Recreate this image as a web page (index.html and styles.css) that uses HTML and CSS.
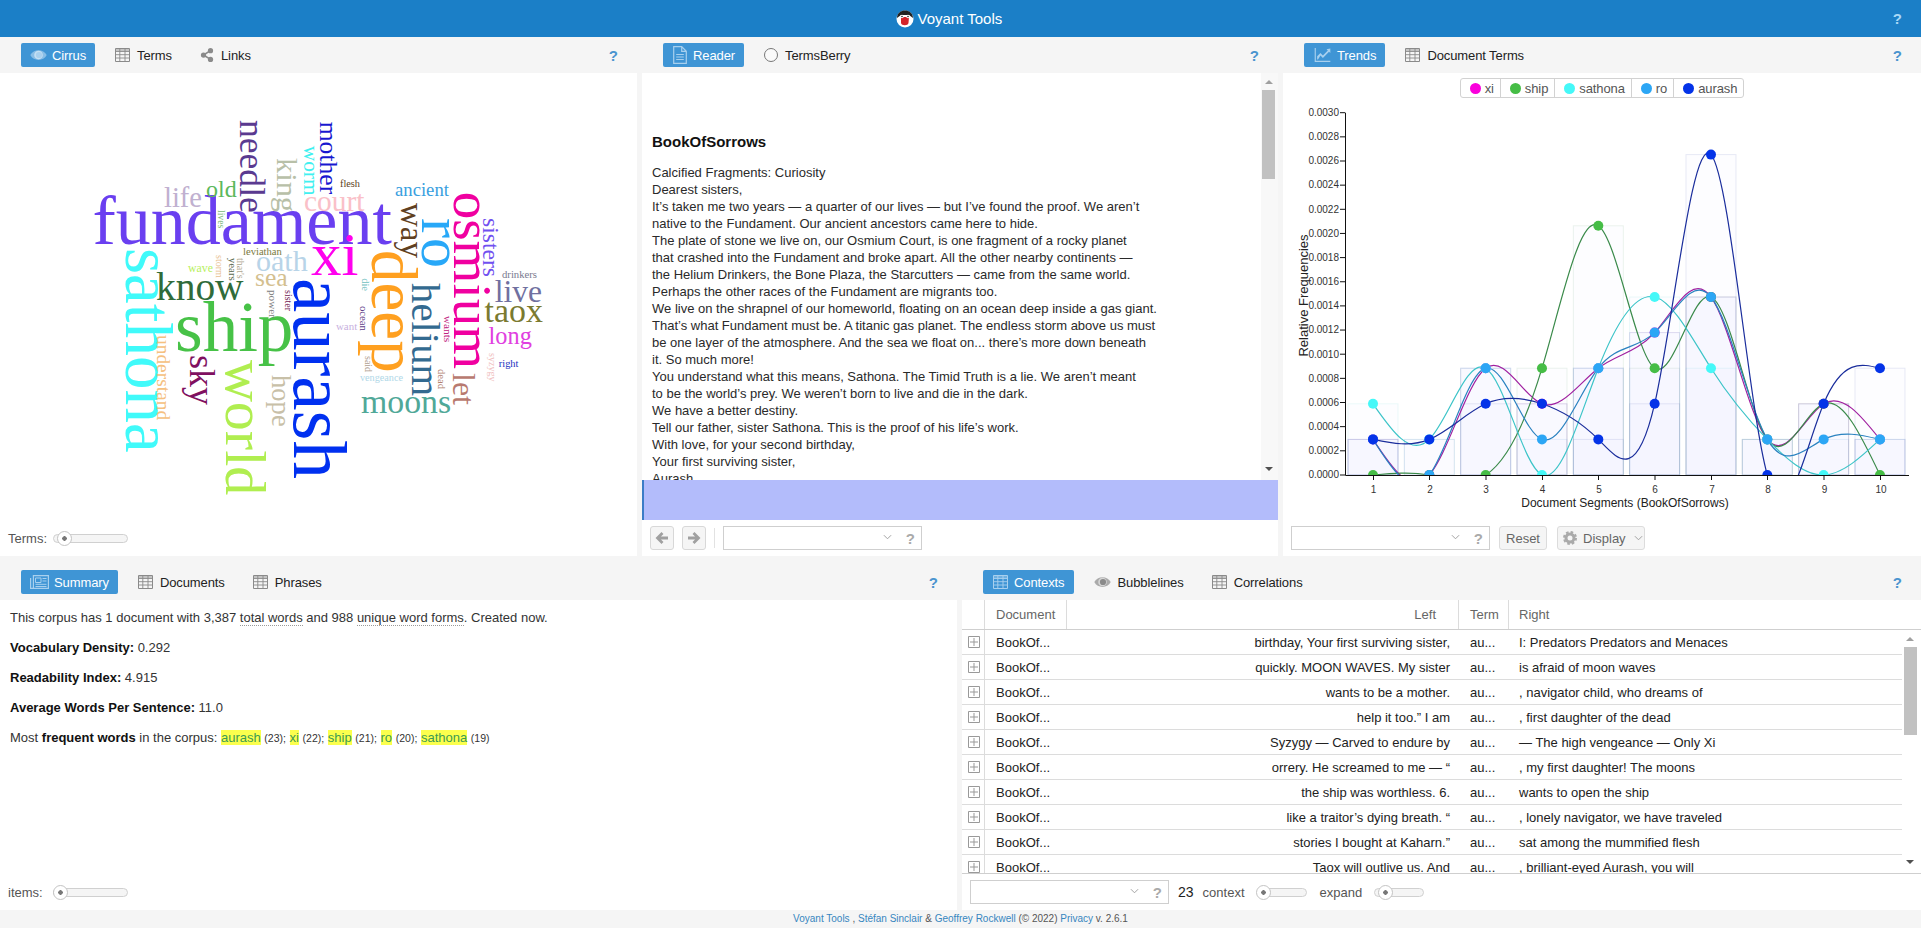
FILE: index.html
```html
<!DOCTYPE html>
<html lang="en">
<head>
<meta charset="utf-8">
<title>Voyant Tools</title>
<link rel="stylesheet" href="styles.css">
<script src="chart.js" defer></script>
</head>
<body>
<svg class="sprites" width="0" height="0" aria-hidden="true">
  <symbol id="i-table" viewBox="0 0 15 14"><path d="M.5.5h14v13H.5z" fill="none" stroke="currentColor"/><path d="M.5 3.5h14M.5 6.7h14M.5 10h14M4.8.5v13M10 .5v13" fill="none" stroke="currentColor" stroke-width=".9"/><path d="M1 1h13v2H1z" fill="currentColor" opacity=".45"/></symbol>
  <symbol id="i-eye" viewBox="0 0 17 12"><path d="M.3 6C3.500-.5 13.500-.5 16.700 6 13.500 12.500 3.500 12.500.3 6Z" fill="currentColor" opacity=".7"/><circle cx="8.500" cy="6" r="4.300" fill="#fff" opacity=".5"/><circle cx="9" cy="6" r="3.100" fill="currentColor"/></symbol>
  <symbol id="i-share" viewBox="0 0 14 16"><path d="M3 8 11 3M3 8l8 5" stroke="currentColor" stroke-width="1.8"/><circle cx="3" cy="8" r="3" fill="currentColor"/><circle cx="11" cy="3" r="3" fill="currentColor"/><circle cx="11" cy="13" r="3" fill="currentColor"/></symbol>
  <symbol id="i-doc" viewBox="0 0 14 18"><path d="M.7.7h8l4.600 4.600v12H.7zM8.700.7v4.600h4.600" fill="none" stroke="currentColor" stroke-width="1.200"/><path d="M3.200 8.500h7.600M3.200 11h7.600M3.200 13.500h7.600" stroke="currentColor"/></symbol>
  <symbol id="i-line" viewBox="0 0 19 17"><path d="M.7 0v16.200H19" fill="none" stroke="currentColor" stroke-width="1.400"/><path d="M3 14V10l4-4 3 3 6-6-1.600-1.600L19 .5V6l-1.600-1.500L10 12 7 9l-3 5z" fill="currentColor"/></symbol>
  <symbol id="i-news" viewBox="0 0 19 14"><path d="M.6 3v10.400h17.800V.6H3.400V13" fill="none" stroke="currentColor" stroke-width="1.200"/><path d="M5.500 3h5.500v4.500H5.500zM12.500 3.500h4M12.500 6h4M5.500 9.300h11M5.500 11.500h11" fill="none" stroke="currentColor"/></symbol>
  <symbol id="i-gear" viewBox="0 0 14 14"><circle cx="7" cy="7" r="4" fill="none" stroke="currentColor" stroke-width="3"/><circle cx="7" cy="7" r="6" fill="none" stroke="currentColor" stroke-width="2" stroke-dasharray="2.600 2.100"/></symbol>
  <symbol id="i-left" viewBox="0 0 14 14"><path d="M7.500 2 2.500 7l5 5M3 7h10" fill="none" stroke="currentColor" stroke-width="2.800"/></symbol>
  <symbol id="i-right" viewBox="0 0 14 14"><path d="M6.500 2l5 5-5 5M11 7H1" fill="none" stroke="currentColor" stroke-width="2.800"/></symbol>
  <symbol id="i-chev" viewBox="0 0 10 6"><path d="M1 1l4 4 4-4" fill="none" stroke="currentColor"/></symbol>
  <symbol id="i-plus" viewBox="0 0 12 12"><path d="M.5.5h11v11H.5zM6 2v8M2 6h8" fill="none" stroke="currentColor"/></symbol>
</svg>

<div class="page">
  <header class="app-bar">
    <svg class="logo" viewBox="0 0 18 18" aria-hidden="true">
      <circle cx="9" cy="9" r="8.500" fill="#fff"/>
      <path d="M1 8C1 3 5 .5 9 .5S17 3 17 8L13 5H5Z" fill="#222"/>
      <path d="M5 7h8l-.5 6c-.4 3-7.100 3-7.500 0Z" fill="#d3232a"/>
      <circle cx="6" cy="6.500" r="1.800" fill="#fff"/><circle cx="12" cy="6.500" r="1.800" fill="#fff"/>
      <circle cx="6" cy="6.500" r=".8" fill="#222"/><circle cx="12" cy="6.500" r=".8" fill="#222"/>
    </svg>
    <span class="app-title">Voyant Tools</span>
    <span class="app-help">?</span>
  </header>

  <div class="row row-top">
    <section class="panel">
      <div class="tabs">
        <span class="tab active"><svg class="ico w17"><use href="#i-eye"/></svg>Cirrus</span>
        <span class="tab"><svg class="ico w15"><use href="#i-table"/></svg>Terms</span>
        <span class="tab"><svg class="ico w14"><use href="#i-share"/></svg>Links</span>
        <span class="help">?</span>
      </div>
      <div class="cloud-wrap">
        <svg class="cloud" width="637" height="447" viewBox="0 73 637 447">
          <text x="92.500" y="244" font-size="70" fill="#6a3ff0">fundament</text>
          <text x="311" y="275" font-size="61" fill="#ff00ee">xi</text>
          <text x="175" y="350.700" font-size="71" fill="#47c247">ship</text>
          <text x="156" y="300" font-size="39.400" fill="#2f6b3a">know</text>
          <text x="164" y="206.700" font-size="28.500" fill="#c0b0d0">life</text>
          <text x="206" y="196.700" font-size="24" fill="#5cb85c">old</text>
          <text x="304" y="210.700" font-size="29.400" fill="#fac0c8">court</text>
          <text x="395" y="196" font-size="18.700" fill="#39a0e0">ancient</text>
          <text x="340" y="186.700" font-size="10.300" fill="#5a4020">flesh</text>
          <text x="243" y="254.700" font-size="10.600" fill="#7a7a40">leviathan</text>
          <text x="256" y="270.700" font-size="30" fill="#b8d4e8">oath</text>
          <text x="188" y="271.700" font-size="11.800" fill="#b8f060">wave</text>
          <text x="255" y="285.700" font-size="25.600" fill="#d4c090">sea</text>
          <text x="502" y="277.700" font-size="10.700" fill="#7a7a90">drinkers</text>
          <text x="494.700" y="301.700" font-size="31.500" fill="#7070a0">live</text>
          <text x="484.500" y="322.300" font-size="33.900" fill="#7a7a30">taox</text>
          <text x="488.600" y="344" font-size="24.300" fill="#e040e0">long</text>
          <text x="498.800" y="367" font-size="10.400" fill="#2030c0">right</text>
          <text x="361" y="413" font-size="33.800" fill="#50a898">moons</text>
          <text x="360" y="380.700" font-size="10.200" fill="#b0d8e8">vengeance</text>
          <text x="336" y="330" font-size="10.900" fill="#c8b0e0">want</text>

          <text x="125.700" y="248" transform="rotate(90 125.700 248)" font-size="67" fill="#40fafa">sathona</text>
          <text x="157" y="335" transform="rotate(90 157 335)" font-size="19.400" fill="#f5c080">understand</text>
          <text x="189.600" y="355" transform="rotate(90 189.600 355)" font-size="36" fill="#801060">sky</text>
          <text x="240" y="120" transform="rotate(90 240 120)" font-size="35.600" fill="#5a3a90">needle</text>
          <text x="277" y="158" transform="rotate(90 277 158)" font-size="30.400" fill="#b8c0a8">king</text>
          <text x="304" y="145.700" transform="rotate(90 304 145.700)" font-size="21.400" fill="#40f0f0">worm</text>
          <text x="320.400" y="121.700" transform="rotate(90 320.400 121.700)" font-size="25.600" fill="#1818d0">mother</text>
          <text x="401" y="203" transform="rotate(90 401 203)" font-size="33" fill="#604020">way</text>
          <text x="422.400" y="218" transform="rotate(90 422.400 218)" font-size="60" fill="#28a8f8">ro</text>
          <text x="454" y="191.700" transform="rotate(90 454 191.700)" font-size="55" fill="#f000a0">osmium</text>
          <text x="453" y="373" transform="rotate(90 453 373)" font-size="32" fill="#b87a70">let</text>
          <text x="483" y="218" transform="rotate(90 483 218)" font-size="23.600" fill="#7050f0">sisters</text>
          <text x="294" y="278" transform="rotate(90 294 278)" font-size="77" fill="#0030f0">aurash</text>
          <text x="225.700" y="360" transform="rotate(90 225.700 360)" font-size="58" fill="#b0ee50">world</text>
          <text x="272" y="375" transform="rotate(90 272 375)" font-size="26.600" fill="#c8c0a8">hope</text>
          <text x="372" y="250" transform="rotate(90 372 250)" font-size="65" fill="#ffa020">deep</text>
          <text x="412" y="283" transform="rotate(90 412 283)" font-size="40.800" fill="#336a90">helium</text>
          <text x="217.500" y="210" transform="rotate(90 217.500 210)" font-size="9.600" fill="#78b878">lives</text>
          <text x="215.500" y="255" transform="rotate(90 215.500 255)" font-size="10" fill="#e8c090">storm</text>
          <text x="228.600" y="257.700" transform="rotate(90 228.600 257.700)" font-size="11" fill="#5a6a50">years</text>
          <text x="236.700" y="258" transform="rotate(90 236.700 258)" font-size="10" fill="#b0a890">that's</text>
          <text x="268.600" y="290" transform="rotate(90 268.600 290)" font-size="11.200" fill="#808080">power</text>
          <text x="284.500" y="290" transform="rotate(90 284.500 290)" font-size="10" fill="#702050">sister</text>
          <text x="362.400" y="278.300" transform="rotate(90 362.400 278.300)" font-size="10.400" fill="#70c0c0">die</text>
          <text x="360.400" y="306" transform="rotate(90 360.400 306)" font-size="10.700" fill="#604088">ocean</text>
          <text x="443.700" y="315.700" transform="rotate(90 443.700 315.700)" font-size="11.400" fill="#c02080">wants</text>
          <text x="438" y="369" transform="rotate(90 438 369)" font-size="10.600" fill="#b08070">dead</text>
          <text x="364.500" y="356" transform="rotate(90 364.500 356)" font-size="10" fill="#b0a090">said</text>
          <text x="488.600" y="353" transform="rotate(90 488.600 353)" font-size="10.100" fill="#f0c0c0">syzygy</text>
        </svg>
      </div>
      <div class="foot">
        <span class="foot-label">Terms:</span>
        <span class="slider"><span class="thumb thumb-terms"></span></span>
      </div>
    </section>

    <section class="panel">
      <div class="tabs">
        <span class="tab active"><svg class="ico w16 h18"><use href="#i-doc"/></svg>Reader</span>
        <span class="tab"><span class="radio"></span>TermsBerry</span>
        <span class="help">?</span>
      </div>
      <div class="reader">
        <div class="reader-text">
          <h2 class="reader-title">BookOfSorrows</h2>
          <div>Calcified Fragments: Curiosity</div>
          <div>Dearest sisters,</div>
          <div>It’s taken me two years — a quarter of our lives — but I’ve found the proof. We aren’t</div>
          <div>native to the Fundament. Our ancient ancestors came here to hide.</div>
          <div>The plate of stone we live on, our Osmium Court, is one fragment of a rocky planet</div>
          <div>that crashed into the Fundament and broke apart. All the other nearby continents —</div>
          <div>the Helium Drinkers, the Bone Plaza, the Starcutters — came from the same world.</div>
          <div>Perhaps the other races of the Fundament are migrants too.</div>
          <div>We live on the shrapnel of our homeworld, floating on an ocean deep inside a gas giant.</div>
          <div>That’s what Fundament must be. A titanic gas planet. The endless storm above us must</div>
          <div>be one layer of the atmosphere. And the sea we float on... there’s more down beneath</div>
          <div>it. So much more!</div>
          <div>You understand what this means, Sathona. The Timid Truth is a lie. We aren’t meant</div>
          <div>to be the world’s prey. We weren’t born to live and die in the dark.</div>
          <div>We have a better destiny.</div>
          <div>Tell our father, sister Sathona. This is the proof of his life’s work.</div>
          <div>With love, for your second birthday,</div>
          <div>Your first surviving sister,</div>
          <div>Aurash</div>
        </div>
        <div class="scrollbar scrollbar-reader">
          <span class="arrow-up"></span>
          <span class="sb-thumb"></span>
          <span class="arrow-down"></span>
        </div>
      </div>
      <div class="segments"></div>
      <div class="foot foot-tools">
        <span class="icon-btn"><svg class="ico w14"><use href="#i-left"/></svg></span>
        <span class="icon-btn"><svg class="ico w14"><use href="#i-right"/></svg></span>
        <span class="sep"></span>
        <span class="combo"><svg class="chev"><use href="#i-chev"/></svg><span class="combo-help">?</span></span>
      </div>
    </section>

    <section class="panel">
      <div class="tabs">
        <span class="tab active"><svg class="ico w19"><use href="#i-line"/></svg>Trends</span>
        <span class="tab"><svg class="ico w15"><use href="#i-table"/></svg>Document Terms</span>
        <span class="help">?</span>
      </div>
      <div class="trends">
        <div class="legend">
          <span class="legend-item"><i class="dot dot-xi"></i>xi</span>
          <span class="legend-item"><i class="dot dot-ship"></i>ship</span>
          <span class="legend-item"><i class="dot dot-sathona"></i>sathona</span>
          <span class="legend-item"><i class="dot dot-ro"></i>ro</span>
          <span class="legend-item"><i class="dot dot-aurash"></i>aurash</span>
        </div>
        <svg class="chart" id="chart" width="638" height="422" viewBox="1283 98 638 422">
          <defs><clipPath id="plot"><rect x="1345" y="100" width="564" height="375"/></clipPath></defs>
          <g id="plot-layer" clip-path="url(#plot)"></g>
          <path class="axis" d="M1345.500 112.700V475.500H1909"/>
          <path class="axis" d="M1340 112.700h5M1340 136.850h5M1340 161h5M1340 185.150h5M1340 209.300h5M1340 233.450h5M1340 257.600h5M1340 281.750h5M1340 305.900h5M1340 330.050h5M1340 354.200h5M1340 378.350h5M1340 402.500h5M1340 426.650h5M1340 450.800h5M1340 475h5"/>
          <path class="axis" d="M1373.500 475v5M1429.500 475v5M1486 475v5M1542.500 475v5M1598.500 475v5M1655 475v5M1711.500 475v5M1767.500 475v5M1824 475v5M1880.500 475v5"/>
          <g class="ticks ticks-y">
            <text x="1339" y="116">0.0030</text><text x="1339" y="140">0.0028</text><text x="1339" y="164">0.0026</text><text x="1339" y="188">0.0024</text><text x="1339" y="213">0.0022</text><text x="1339" y="237">0.0020</text><text x="1339" y="261">0.0018</text><text x="1339" y="285">0.0016</text><text x="1339" y="309">0.0014</text><text x="1339" y="333">0.0012</text><text x="1339" y="358">0.0010</text><text x="1339" y="382">0.0008</text><text x="1339" y="406">0.0006</text><text x="1339" y="430">0.0004</text><text x="1339" y="454">0.0002</text><text x="1339" y="478">0.0000</text>
          </g>
          <g class="ticks ticks-x">
            <text x="1373.500" y="493">1</text><text x="1430" y="493">2</text><text x="1486" y="493">3</text><text x="1542.500" y="493">4</text><text x="1599" y="493">5</text><text x="1655" y="493">6</text><text x="1712" y="493">7</text><text x="1768" y="493">8</text><text x="1824.500" y="493">9</text><text x="1881" y="493">10</text>
          </g>
          <text class="axis-title" x="1625" y="507">Document Segments (BookOfSorrows)</text>
          <text class="axis-title axis-title-y" x="1308" y="295.500" transform="rotate(-90 1308 295.500)">Relative Frequencies</text>
        </svg>
      </div>
      <div class="foot foot-tools">
        <span class="combo"><svg class="chev"><use href="#i-chev"/></svg><span class="combo-help">?</span></span>
        <span class="btn btn-reset">Reset</span>
        <span class="btn btn-display"><svg class="ico w14 gear"><use href="#i-gear"/></svg>Display<svg class="chev chev-btn"><use href="#i-chev"/></svg></span>
      </div>
    </section>
  </div>

  <div class="row row-bottom">
    <section class="panel">
      <div class="tabs">
        <span class="tab active"><svg class="ico w19"><use href="#i-news"/></svg>Summary</span>
        <span class="tab"><svg class="ico w15"><use href="#i-table"/></svg>Documents</span>
        <span class="tab"><svg class="ico w15"><use href="#i-table"/></svg>Phrases</span>
        <span class="help">?</span>
      </div>
      <div class="summary">
        <p>This corpus has 1 document with 3,387 <span class="dotted">total words</span> and 988 <span class="dotted">unique word forms</span>. Created now.</p>
        <p><b>Vocabulary Density:</b> 0.292</p>
        <p><b>Readability Index:</b> 4.915</p>
        <p><b>Average Words Per Sentence:</b> 11.0</p>
        <p>Most <b>frequent words</b> in the corpus: <mark>aurash</mark> <small>(23);</small> <mark>xi</mark> <small>(22);</small> <mark>ship</mark> <small>(21);</small> <mark>ro</mark> <small>(20);</small> <mark>sathona</mark> <small>(19)</small></p>
      </div>
      <div class="foot">
        <span class="foot-label">items:</span>
        <span class="slider"><span class="thumb thumb-items"></span></span>
      </div>
    </section>

    <section class="panel">
      <div class="tabs">
        <span class="tab active"><svg class="ico w17"><use href="#i-table"/></svg>Contexts</span>
        <span class="tab"><svg class="ico w17"><use href="#i-eye"/></svg>Bubblelines</span>
        <span class="tab"><svg class="ico w15"><use href="#i-table"/></svg>Correlations</span>
        <span class="help">?</span>
      </div>
      <div class="grid-head grid-cols">
        <span class="cell-exp"></span>
        <span class="cell-doc">Document</span>
        <span class="cell-left">Left</span>
        <span class="cell-term">Term</span>
        <span class="cell-right">Right</span>
      </div>
      <div class="grid-body">
        <div class="grid-rows">
          <div class="grid-row grid-cols"><span class="cell-exp"><svg class="plus"><use href="#i-plus"/></svg></span><span class="cell-doc">BookOf...</span><span class="cell-left">birthday, Your first surviving sister,</span><span class="cell-term">au...</span><span class="cell-right">I: Predators Predators and Menaces</span></div>
          <div class="grid-row grid-cols"><span class="cell-exp"><svg class="plus"><use href="#i-plus"/></svg></span><span class="cell-doc">BookOf...</span><span class="cell-left">quickly. MOON WAVES. My sister</span><span class="cell-term">au...</span><span class="cell-right">is afraid of moon waves</span></div>
          <div class="grid-row grid-cols"><span class="cell-exp"><svg class="plus"><use href="#i-plus"/></svg></span><span class="cell-doc">BookOf...</span><span class="cell-left">wants to be a mother.</span><span class="cell-term">au...</span><span class="cell-right">, navigator child, who dreams of</span></div>
          <div class="grid-row grid-cols"><span class="cell-exp"><svg class="plus"><use href="#i-plus"/></svg></span><span class="cell-doc">BookOf...</span><span class="cell-left">help it too.” I am</span><span class="cell-term">au...</span><span class="cell-right">, first daughter of the dead</span></div>
          <div class="grid-row grid-cols"><span class="cell-exp"><svg class="plus"><use href="#i-plus"/></svg></span><span class="cell-doc">BookOf...</span><span class="cell-left">Syzygy — Carved to endure by</span><span class="cell-term">au...</span><span class="cell-right">— The high vengeance — Only Xi</span></div>
          <div class="grid-row grid-cols"><span class="cell-exp"><svg class="plus"><use href="#i-plus"/></svg></span><span class="cell-doc">BookOf...</span><span class="cell-left">orrery. He screamed to me — “</span><span class="cell-term">au...</span><span class="cell-right">, my first daughter! The moons</span></div>
          <div class="grid-row grid-cols"><span class="cell-exp"><svg class="plus"><use href="#i-plus"/></svg></span><span class="cell-doc">BookOf...</span><span class="cell-left">the ship was worthless. 6.</span><span class="cell-term">au...</span><span class="cell-right">wants to open the ship</span></div>
          <div class="grid-row grid-cols"><span class="cell-exp"><svg class="plus"><use href="#i-plus"/></svg></span><span class="cell-doc">BookOf...</span><span class="cell-left">like a traitor’s dying breath. “</span><span class="cell-term">au...</span><span class="cell-right">, lonely navigator, we have traveled</span></div>
          <div class="grid-row grid-cols"><span class="cell-exp"><svg class="plus"><use href="#i-plus"/></svg></span><span class="cell-doc">BookOf...</span><span class="cell-left">stories I bought at Kaharn.”</span><span class="cell-term">au...</span><span class="cell-right">sat among the mummified flesh</span></div>
          <div class="grid-row grid-cols"><span class="cell-exp"><svg class="plus"><use href="#i-plus"/></svg></span><span class="cell-doc">BookOf...</span><span class="cell-left">Taox will outlive us. And</span><span class="cell-term">au...</span><span class="cell-right">, brilliant-eyed Aurash, you will</span></div>
        </div>
        <div class="scrollbar scrollbar-grid">
          <span class="arrow-up"></span>
          <span class="sb-thumb"></span>
          <span class="arrow-down"></span>
        </div>
      </div>
      <div class="foot foot-grid">
        <span class="combo"><svg class="chev"><use href="#i-chev"/></svg><span class="combo-help">?</span></span>
        <span class="count">23</span>
        <span class="foot-label">context</span>
        <span class="slider slider-short slider-ctx"><span class="thumb thumb-ctx"></span></span>
        <span class="foot-label label-expand">expand</span>
        <span class="slider slider-short slider-ctx"><span class="thumb thumb-expand"></span></span>
      </div>
    </section>
  </div>

  <footer class="credits">
    <a>Voyant Tools</a> , <a>Stéfan Sinclair</a> &amp; <a>Geoffrey Rockwell</a> (© 2022) <a>Privacy</a> v. 2.6.1
  </footer>
</div>
</body>
</html>
```

FILE: styles.css
```css
* { box-sizing: border-box; }
html, body { margin: 0; height: 100%; }
body {
  font-family: "Liberation Sans", Arial, sans-serif;
  font-size: 13px;
  color: #222;
  background: #f5f5f5;
  overflow: hidden;
}
.sprites { position: absolute; }
.page { display: flex; flex-direction: column; width: 1921px; height: 928px; }

.app-bar {
  height: 37px;
  flex: none;
  background: #1b7fc7;
  color: #fff;
  display: flex;
  align-items: center;
  justify-content: center;
  position: relative;
  padding-right: 24px;
}
.logo { width: 18px; height: 18px; margin-right: 4px; }
.app-title { font-size: 15px; width: 84px; white-space: nowrap; }
.app-help {
  position: absolute;
  right: 19px;
  top: 10px;
  font: bold 15px "Liberation Sans", sans-serif;
  color: #a9d8f6;
}

.row { display: grid; column-gap: 5px; flex: none; }
.row-top { grid-template-columns: 637px 636px 638px; height: 519px; margin-bottom: 8px; }
.row-bottom { grid-template-columns: 957px 959px; height: 346px; }

.panel { display: flex; flex-direction: column; min-width: 0; min-height: 0; }
.tabs {
  height: 36px;
  flex: none;
  display: flex;
  align-items: center;
  padding-left: 21px;
  gap: 10px;
  background: #f5f5f5;
}
.tab {
  display: flex;
  align-items: center;
  height: 24px;
  padding: 0 9px;
  gap: 7px;
  color: #222;
  white-space: nowrap;
  border-radius: 2px;
  letter-spacing: -0.1px;
}
.tab .ico { color: #8a8a8a; }
.tab.active { background: #3f95d5; color: #fff; gap: 5px; margin-right: 1px; }
.tab.active .ico { color: #a8d0ee; }
.help {
  margin-left: auto;
  margin-right: 19px;
  font-weight: bold;
  font-size: 15px;
  color: #4a94cf;
}

.ico { display: block; height: 14px; flex: none; }
.w14 { width: 14px; }
.w15 { width: 15px; }
.w16 { width: 16px; }
.w17 { width: 17px; }
.w19 { width: 19px; }
.h18 { height: 18px; }
.radio {
  width: 14px;
  height: 14px;
  border: 1px solid #777;
  border-radius: 50%;
  background: #fafafa;
  flex: none;
}

.cloud-wrap { flex: 1; background: #fff; overflow: hidden; min-height: 0; }
.cloud { display: block; }
.cloud text { font-family: "Liberation Serif", "Times New Roman", serif; }

.foot {
  height: 36px;
  flex: none;
  background: #fff;
  display: flex;
  align-items: center;
  padding-left: 8px;
}
.foot-label { color: #555; }
.foot-tools { gap: 8px; }
.foot-grid { gap: 9px; }

.slider {
  position: relative;
  display: block;
  width: 75px;
  height: 9px;
  margin-left: 8px;
  background: #f5f5f5;
  border: 1px solid #d0d0d0;
  border-radius: 5px;
}
.foot .foot-label + .slider { margin-left: 9px; }
.foot-label:first-child { width: 36px; }
.slider-short { width: 50px; }
.foot-grid .foot-label + .slider-ctx { margin-left: 3px; }
.label-expand { margin-left: 4px; }
.thumb {
  position: absolute;
  top: -4px;
  width: 15px;
  height: 15px;
  border: 1px solid #c4c4c4;
  border-radius: 50%;
  background: radial-gradient(circle, #777 0 2px, #fff 2.5px);
}
.thumb-terms { left: 3px; }
.thumb-items { left: -1px; }
.thumb-ctx { left: -2px; }
.thumb-expand { left: 3px; }

.reader { height: 407px; flex: none; display: flex; background: #fff; overflow: hidden; }
.reader-text { flex: 1; padding: 0 0 0 10px; line-height: 17px; font-size: 13px; color: #2a2a2a; white-space: nowrap; overflow: hidden; }
.reader-title { font-size: 15px; line-height: 17px; font-weight: bold; margin: 60px 0 14px; color: #111; }
.scrollbar { flex: none; position: relative; background: #f8f8f8; }
.scrollbar-reader { width: 17px; }
.scrollbar-grid { width: 19px; background: #fff; }
.sb-thumb { position: absolute; left: 1px; width: 13px; background: #c1c1c1; }
.scrollbar-reader .sb-thumb { top: 17px; height: 89px; }
.scrollbar-grid .sb-thumb { top: 17px; height: 88px; left: 2px; }
.arrow-up, .arrow-down { position: absolute; left: 4px; width: 0; height: 0; border-left: 4px solid transparent; border-right: 4px solid transparent; }
.arrow-up { top: 7px; border-bottom: 4px solid #a0a0a0; }
.arrow-down { bottom: 9px; border-top: 4px solid #505050; }

.segments { height: 40px; flex: none; background: #b3bcfb; border-left: 2px solid #3b7cc6; }

.icon-btn {
  width: 24px;
  height: 24px;
  display: flex;
  align-items: center;
  justify-content: center;
  background: #f5f5f5;
  border: 1px solid #d8d8d8;
  border-radius: 3px;
  color: #a0a0a0;
}
.sep { width: 1px; height: 20px; background: #e2e2e2; }
.combo {
  position: relative;
  width: 199px;
  height: 24px;
  flex: none;
  border: 1px solid #cfcfcf;
  background: #fff;
}
.chev { width: 9px; height: 6px; display: block; color: #999; }
.combo .chev { position: absolute; right: 29px; top: 7px; }
.combo-help { position: absolute; right: 6px; top: 3px; font-weight: bold; font-size: 15px; color: #aaa; }
.btn {
  height: 24px;
  display: flex;
  align-items: center;
  background: #f5f5f5;
  border: 1px solid #dcdcdc;
  border-radius: 3px;
  color: #666;
}
.btn-reset { width: 48px; justify-content: center; margin-left: 1px; }
.btn-display { width: 88px; padding-left: 5px; margin-left: 2px; gap: 6px; }
.gear { color: #aaa; }
.chev-btn { margin-left: 2px; }

.trends { flex: 1; background: #fff; display: flex; flex-direction: column; align-items: center; padding-top: 5px; min-height: 0; }
.legend {
  height: 20px;
  flex: none;
  display: flex;
  border: 1px solid #d2d2d2;
  border-radius: 3px;
  background: #fff;
  color: #555;
  letter-spacing: -0.1px;
}
.legend-item {
  display: flex;
  align-items: center;
  gap: 4px;
  padding: 0 6px 0 9px;
  border-right: 1px solid #d2d2d2;
}
.legend-item:last-child { border-right: 0; }
.dot { width: 11px; height: 11px; border-radius: 50%; flex: none; display: block; }
.dot-xi { background: #fa00dc; }
.dot-ship { background: #46bd46; }
.dot-sathona { background: #45f8f8; }
.dot-ro { background: #2ca6f5; }
.dot-aurash { background: #0433e8; }
.chart { display: block; flex: none; align-self: flex-start; }
.axis { stroke: #111; stroke-width: 1; fill: none; }
.ticks text { font-size: 10px; fill: #333; }
.ticks-y text { text-anchor: end; }
.ticks-x text { text-anchor: middle; }
.axis-title { font-size: 12px; fill: #222; text-anchor: middle; }
.axis-title-y { font-size: 13px; }

.summary { flex: 1; background: #fff; padding: 10px 10px 0; color: #333; min-height: 0; }
.summary p { margin: 0 0 14px; line-height: 16px; white-space: nowrap; }
.summary b { color: #111; }
.summary small { font-size: 10.500px; }
.summary mark { background: #fbff4d; color: #3b9a52; }
.dotted { border-bottom: 1px dotted #9a9a9a; }

.grid-cols { display: grid; grid-template-columns: 23px 81.500px 392.500px 50px 1fr; }
.grid-head {
  height: 30px;
  flex: none;
  background: #fff;
  border-bottom: 1px solid #cfcfcf;
  color: #666;
  align-items: stretch;
}
.grid-head > span { display: flex; align-items: center; border-right: 1px solid #dcdcdc; }
.grid-head > .cell-right { border-right: 0; }
.grid-head .cell-left { justify-content: flex-end; padding-right: 22px; }
.grid-head .cell-term { padding-left: 11px; }
.grid-head .cell-doc { padding-left: 11px; }
.grid-head .cell-right { padding-left: 10px; }
.grid-body { height: 244px; flex: none; display: flex; background: #fff; overflow: hidden; border-bottom: 1px solid #cfcfcf; }
.grid-rows { flex: 1; overflow: hidden; min-width: 0; }
.grid-row { height: 25px; border-bottom: 1px solid #dcdcdc; align-items: center; color: #222; white-space: nowrap; }
.cell-exp { height: 100%; display: flex; align-items: center; padding-left: 6px; border-right: 1px solid #dcdcdc; }
.plus { width: 12px; height: 12px; color: #999; display: block; }
.grid-row .cell-doc { padding-left: 11px; }
.cell-left { text-align: right; padding-right: 9px; }
.grid-row .cell-term { padding-left: 11px; }
.grid-row .cell-right { padding-left: 10px; }
.count { color: #222; font-size: 14px; }

.credits {
  height: 18px;
  flex: none;
  text-align: center;
  line-height: 18px;
  font-size: 10px;
  color: #555;
  background: #f5f5f5;
}
.credits a { color: #3786bf; }
```

FILE: chart.js
```js
// Draws the Trends series: bars, natural cubic curves and points from term counts per segment.
(function () {
  var NS = 'http://www.w3.org/2000/svg';
  var layer = document.getElementById('plot-layer');
  var X0 = 1373, DX = 56.33, Y0 = 475, UNIT = 35.6;
  var series = [
    { color: '#fa00dc', line: '#a020a0', counts: [1, 0, 3, 2, 3, 4, 5, 1, 2, 1] },
    { color: '#46bd46', line: '#3a8a4a', counts: [0, 0, 0, 3, 7, 3, 5, 1, 2, 0] },
    { color: '#45f8f8', line: '#3cc4c8', counts: [2, 1, 3, 0, 3, 5, 3, 1, 0, 1] },
    { color: '#2ca6f5', line: '#2a82c0', counts: [1, 0, 3, 1, 3, 4, 5, 1, 1, 1] },
    { color: '#0433e8', line: '#1a2d9c', counts: [1, 1, 2, 2, 1, 2, 9, 0, 2, 3] }
  ];

  function el(name, attrs) {
    var node = document.createElementNS(NS, name);
    Object.keys(attrs).forEach(function (k) { node.setAttribute(k, attrs[k]); });
    layer.appendChild(node);
    return node;
  }

  function controls(x) {
    var n = x.length - 1, a = [], b = [], r = [], i, m;
    a[0] = 0; b[0] = 2; r[0] = x[0] + 2 * x[1];
    for (i = 1; i < n - 1; i++) { a[i] = 1; b[i] = 4; r[i] = 4 * x[i] + 2 * x[i + 1]; }
    a[n - 1] = 2; b[n - 1] = 7; r[n - 1] = 8 * x[n - 1] + x[n];
    for (i = 1; i < n; i++) { m = a[i] / b[i - 1]; b[i] -= m; r[i] -= m * r[i - 1]; }
    a[n - 1] = r[n - 1] / b[n - 1];
    for (i = n - 2; i >= 0; i--) { a[i] = (r[i] - a[i + 1]) / b[i]; }
    b[n - 1] = (x[n] + a[n - 1]) / 2;
    for (i = 0; i < n - 1; i++) { b[i] = 2 * x[i + 1] - a[i + 1]; }
    return [a, b];
  }

  function px(i) { return X0 + i * DX; }
  function py(v) { return Y0 - v * UNIT; }

  series.forEach(function (s) {
    s.counts.forEach(function (v, i) {
      if (!v) return;
      el('rect', {
        x: px(i) - 25, y: py(v), width: 50, height: v * UNIT,
        fill: '#3a48d8', 'fill-opacity': 0.012,
        stroke: s.line, 'stroke-opacity': 0.1
      });
    });
  });

  series.forEach(function (s) {
    var xs = s.counts.map(function (_, i) { return px(i); });
    var ys = s.counts.map(py);
    var cx = controls(xs), cy = controls(ys);
    var d = 'M' + xs[0] + ' ' + ys[0];
    for (var i = 0; i < xs.length - 1; i++) {
      d += 'C' + cx[0][i] + ' ' + cy[0][i] + ' ' + cx[1][i] + ' ' + cy[1][i] + ' ' + xs[i + 1] + ' ' + ys[i + 1];
    }
    el('path', { d: d, fill: 'none', stroke: s.line, 'stroke-width': 1.2 });
  });

  series.forEach(function (s) {
    s.counts.forEach(function (v, i) {
      el('circle', { cx: px(i), cy: py(v), r: 5, fill: s.color });
    });
  });
})();
```
